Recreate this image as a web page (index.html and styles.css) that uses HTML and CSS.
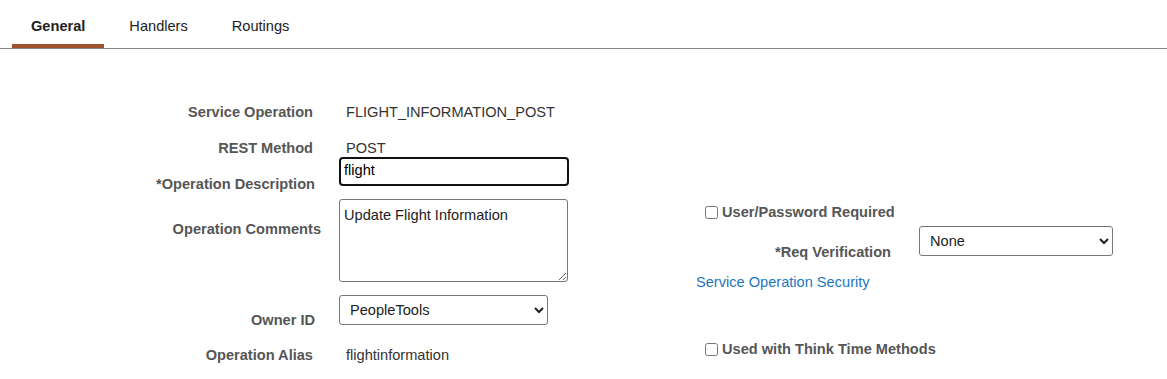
FILE: index.html
```html
<!DOCTYPE html>
<html lang="en">
<head>
  <meta charset="UTF-8">
  <title>Service Operation - General</title>
  <link rel="stylesheet" href="styles.css">
</head>
<body>
  <div class="tabs">
    <a class="tab active" href="#">General</a>
    <a class="tab" href="#">Handlers</a>
    <a class="tab" href="#">Routings</a>
  </div>

  <div class="page">
    <!-- left column: operation fields -->
    <div class="fields">
      <div class="row row-op">
        <span class="label">Service Operation</span>
        <span class="value">FLIGHT_INFORMATION_POST</span>
      </div>
      <div class="row row-method">
        <span class="label">REST Method</span>
        <span class="value">POST</span>
      </div>
      <div class="row row-desc">
        <label class="label" for="descr">*Operation Description</label>
        <input id="descr" class="text-input" type="text" value="flight">
      </div>
      <div class="row row-comments">
        <label class="label" for="comments">Operation Comments</label>
        <textarea id="comments" class="comments">Update Flight Information</textarea>
      </div>
      <div class="row row-owner">
        <label class="label" for="owner">Owner ID</label>
        <select id="owner" class="select owner-select">
          <option>PeopleTools</option>
        </select>
      </div>
      <div class="row row-alias">
        <span class="label">Operation Alias</span>
        <span class="value">flightinformation</span>
      </div>
    </div>

    <!-- right column: security -->
    <div class="security">
      <label class="check">
        <input type="checkbox">
        <span>User/Password Required</span>
      </label>
      <div class="req-row">
        <label class="req-label" for="verify">*Req Verification</label>
        <select id="verify" class="select verify-select">
          <option>None</option>
        </select>
      </div>
      <a class="sec-link" href="#">Service Operation Security</a>
      <label class="check think">
        <input type="checkbox">
        <span>Used with Think Time Methods</span>
      </label>
    </div>
  </div>
</body>
</html>
```

FILE: styles.css
```css
body {
  margin: 0;
  font-family: Arial, "Liberation Sans", sans-serif;
  font-size: 14.6px;
  line-height: 18px;
  color: #333;
  background: #fff;
}

/* tab bar */
.tabs {
  display: flex;
  gap: 6px;
  padding-left: 12px;
  border-bottom: 1px solid #8a8780;
}
.tab {
  padding: 17px 19px 9px;
  border-bottom: 4px solid transparent;
  color: #222;
  text-decoration: none;
}
.tab.active {
  font-weight: bold;
  border-bottom-color: #9e5230;
}

.page {
  display: flex;
  align-items: flex-start;
  padding-top: 54px;
}

/* left column */
.fields {
  width: 569px;
}
.row {
  display: flex;
  gap: 24px;
}
.label {
  width: 315px;
  flex: none;
  text-align: right;
  font-weight: bold;
  color: #565656;
}
.value {
  padding-left: 7px;
}
.row-op .label,
.row-method .label {
  width: 313px;
  margin-right: 2px;
}
.row-method {
  margin-top: 18px;
}
.row-desc .label {
  align-self: flex-end;
  margin-top: 18px;
}
.row-comments {
  margin-top: 6px;
}
.row-comments .label {
  margin-top: 21px;
  width: 321px;
  margin-right: -6px;
}
.row-owner {
  margin-top: 13px;
}
.row-owner .label {
  align-self: flex-end;
  margin-bottom: -4px;
}
.row-alias {
  margin-top: 21px;
}
.row-alias .label {
  width: 313px;
  margin-right: 2px;
}

.text-input {
  box-sizing: border-box;
  width: 230px;
  height: 29px;
  margin: 0;
  padding: 0 3px 4px;
  border: 2px solid #111;
  border-radius: 4px;
  font: 14.6px Arial, "Liberation Sans", sans-serif;
  color: #000;
  outline: none;
}
.comments {
  box-sizing: border-box;
  width: 229px;
  height: 83px;
  margin: 0;
  padding: 7px 4px;
  border: 1px solid #767676;
  border-radius: 3px;
  font: 14.6px Arial, "Liberation Sans", sans-serif;
  color: #222;
  resize: both;
}
.select {
  box-sizing: border-box;
  height: 30px;
  margin: 0;
  padding: 0 4px 0 6px;
  border: 1px solid #767676;
  border-radius: 3px;
  background: #fff;
  font: 14.6px Arial, "Liberation Sans", sans-serif;
  color: #222;
}
.owner-select {
  width: 209px;
}

/* right column */
.security {
  display: flex;
  flex-direction: column;
  align-items: flex-start;
  margin-left: 127px;
  margin-top: 100px;
}
.check {
  display: flex;
  align-items: center;
  margin-left: 9px;
  font-weight: bold;
  color: #565656;
}
.check input {
  width: 13px;
  height: 13px;
  margin: 0 4px 0 0;
}
.req-row {
  display: flex;
  gap: 28px;
  margin-top: 5px;
}
.req-label {
  width: 195px;
  align-self: flex-end;
  margin-bottom: -5px;
  text-align: right;
  font-weight: bold;
  color: #565656;
}
.verify-select {
  width: 194px;
}
.sec-link {
  margin-top: 17px;
  color: #1d77bd;
  text-decoration: none;
}
.think {
  margin-top: 49px;
}
```
